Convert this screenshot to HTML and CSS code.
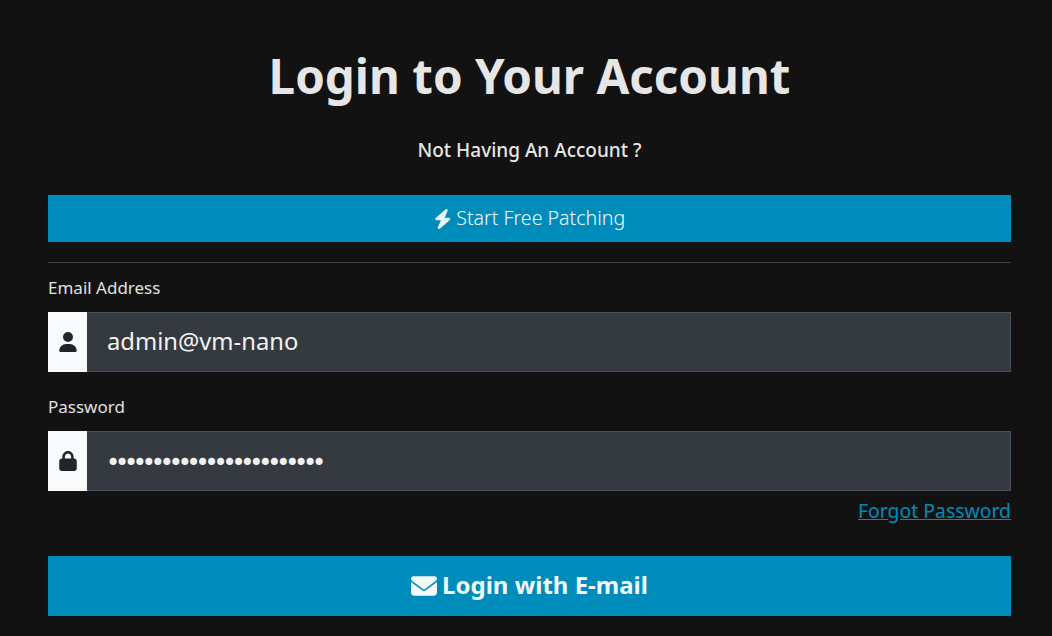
FILE: index.html
```html
<!DOCTYPE html>
<html>
<head>
<meta charset="utf-8">
<title>Login to Your Account</title>
<link rel="stylesheet" href="styles.css">
</head>
<body>
<div class="login">
	<h1 class="title">Login to Your Account</h1>
	<p class="subtitle">Not Having An Account ?</p>
	<a class="btn btn-free" href="#">
		<svg class="icon-bolt" viewBox="0 0 448 512"><path d="M349.4 44.6c5.9-13.7 1.5-29.7-10.6-38.5s-28.6-8-39.9 1.8l-256 224c-10 8.8-13.6 22.9-8.9 35.3S50.7 288 64 288H175.5L98.6 467.4c-5.9 13.7-1.5 29.7 10.6 38.5s28.6 8 39.9-1.8l256-224c10-8.8 13.6-22.9 8.9-35.3s-16.6-20.7-30-20.7H272.5L349.4 44.6z"/></svg>
		Start Free Patching
	</a>
	<hr class="divider">
	<form class="form" action="" method="get">
		<label class="label" for="email">Email Address</label>
		<div class="group">
			<span class="addon"><svg class="icon-addon" viewBox="0 0 448 512"><path d="M224 256A128 128 0 1 0 224 0a128 128 0 1 0 0 256zm-45.7 48C79.8 304 0 383.8 0 482.3C0 498.7 13.3 512 29.7 512H418.3c16.4 0 29.7-13.3 29.7-29.7C448 383.8 368.2 304 269.7 304H178.3z"/></svg></span>
			<input class="field" id="email" type="text" value="admin@vm-nano">
		</div>
		<label class="label label-pass" for="password">Password</label>
		<div class="group">
			<span class="addon"><svg class="icon-addon" viewBox="0 0 448 512"><path d="M144 144v48H304V144c0-44.2-35.8-80-80-80s-80 35.8-80 80zM80 192V144C80 64.5 144.5 0 224 0s144 64.5 144 144v48h16c35.3 0 64 28.7 64 64V448c0 35.3-28.7 64-64 64H64c-35.3 0-64-28.7-64-64V256c0-35.3 28.7-64 64-64H80z"/></svg></span>
			<input class="field field-pass" id="password" type="password" value="aaaaaaaaaaaaaaaaaaaaaaaa">
		</div>
		<div class="forgot"><a href="#">Forgot Password</a></div>
		<button class="btn btn-login" type="button">
			<svg class="icon-mail" viewBox="0 0 512 512"><path d="M48 64C21.5 64 0 85.5 0 112c0 15.1 7.1 29.3 19.2 38.4L236.8 313.6c11.4 8.5 27 8.5 38.4 0L492.8 150.4c12.1-9.1 19.2-23.3 19.2-38.4c0-26.5-21.5-48-48-48H48zM0 176V384c0 35.3 28.7 64 64 64H448c35.3 0 64-28.7 64-64V176L294.4 339.2c-22.8 17.1-54 17.1-76.8 0L0 176z"/></svg>
			Login with E-mail
		</button>
	</form>
</div>
</body>
</html>
```

FILE: styles.css
```css
html, body {
	margin: 0;
	padding: 0;
	height: 636px;
	overflow: hidden;
}

body {
	background-color: #121212;
	color: #e6e6e6;
	font-family: "Noto Sans", "Open Sans", sans-serif;
}

.login {
	padding: 0 41px 0 48px;
	display: flex;
	flex-direction: column;
}

.title {
	margin: 43px 0 0;
	font-size: 47.5px;
	line-height: 66px;
	font-weight: 700;
	text-align: center;
	color: #e6e6e6;
}

.subtitle {
	margin: 28px 0 0;
	font-size: 19px;
	line-height: 26px;
	font-weight: 500;
	text-align: center;
}

.btn {
	display: flex;
	align-items: center;
	justify-content: center;
	box-sizing: border-box;
	width: 100%;
	border: 0;
	background-color: #008cba;
	color: #f2f9fb;
	font-family: inherit;
	text-decoration: none;
}

.btn-free {
	margin-top: 32px;
	height: 47px;
	padding-bottom: 2px;
	gap: 5px;
	font-size: 19.6px;
	font-weight: 300;
}

.icon-bolt {
	width: 17.5px;
	height: 20px;
	margin-top: 2px;
	fill: #e9f4f8;
}

.divider {
	margin: 20px 0 0;
	border: 0;
	border-top: 1px solid #3f3f3f;
}

.form {
	display: flex;
	flex-direction: column;
}

.label {
	margin-top: 13px;
	font-size: 17px;
	line-height: 24px;
	color: #e0e0e0;
}

.label-pass {
	margin-top: 23px;
}

.group {
	display: flex;
	margin-top: 12px;
	height: 60px;
}

.addon {
	display: flex;
	align-items: center;
	justify-content: center;
	width: 39px;
	background-color: #f8f9fa;
}

.icon-addon {
	width: 18px;
	height: 20px;
	fill: #212529;
}

.field {
	flex: 1;
	min-width: 0;
	box-sizing: border-box;
	padding: 0 20px 3px;
	background-color: #343a40;
	border: 1px solid #495057;
	border-left: 0;
	color: #f2f2f2;
	font-family: inherit;
	font-size: 23.75px;
	outline: none;
}

.field-pass {
	padding: 3px 19px 0;
	font-family: "DejaVu Sans", sans-serif;
	font-size: 24px;
	letter-spacing: -5.2px;
}

.forgot {
	margin-top: 8px;
	text-align: right;
	font-size: 19.4px;
	line-height: 24px;
}

.forgot a {
	color: #008cba;
}

.btn-login {
	margin-top: 33px;
	height: 60px;
	padding-bottom: 4px;
	gap: 5px;
	font-size: 24px;
	font-weight: 700;
}

.icon-mail {
	width: 26px;
	height: 26px;
	margin-top: 3px;
	fill: #f2f9fb;
}
```
